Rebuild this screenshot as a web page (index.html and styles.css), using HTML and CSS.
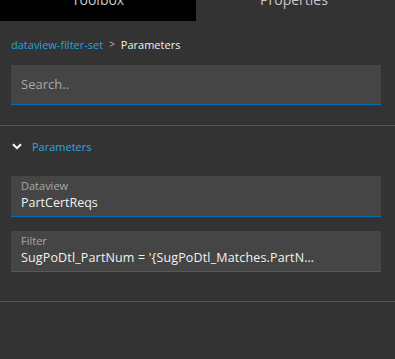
FILE: index.html
```html
<!DOCTYPE html>
<html>
<head>
<meta charset="utf-8">
<link rel="stylesheet" href="styles.css">
</head>
<body>
<div class="tabs">
  <div class="tab tab-active"><span class="tab-label">Toolbox</span></div>
  <div class="tab"><span class="tab-label">Properties</span></div>
</div>
<div class="breadcrumb">
  <span class="crumb-link">dataview-filter-set</span>
  <span class="crumb-sep">&gt;</span>
  <span class="crumb-current">Parameters</span>
</div>
<div class="search-wrap">
  <div class="search">Search..</div>
</div>
<div class="divider"></div>
<div class="section-head">
  <svg class="chevron" width="10" height="7" viewBox="0 0 10 7"><path d="M1 1.2 L5 5.2 L9 1.2" fill="none" stroke="#ffffff" stroke-width="2"/></svg>
  <span class="section-title">Parameters</span>
</div>
<div class="fields">
  <div class="field">
    <div class="field-label">Dataview</div>
    <div class="field-value">PartCertReqs</div>
  </div>
  <div class="field">
    <div class="field-label">Filter</div>
    <div class="field-value field-value-wide">SugPoDtl_PartNum = '{SugPoDtl_Matches.PartN…</div>
  </div>
</div>
<div class="divider divider-bottom"></div>
</body>
</html>
```
FILE: styles.css
```css
html, body {
  margin: 0;
  padding: 0;
  background: #333333;
  font-family: "Open Sans", "Noto Sans", sans-serif;
  overflow: hidden;
}
.tabs {
  display: flex;
  height: 21px;
  overflow: hidden;
}
.tab {
  width: 196px;
  text-align: center;
  color: #c8c8c8;
  font-size: 14px;
}
.tab-active {
  background: #000000;
}
.tab-label {
  display: block;
  margin-top: -9px;
  line-height: 18px;
}
.breadcrumb {
  display: flex;
  align-items: center;
  gap: 5px;
  padding: 14px 11px 0;
  height: 18px;
  font-size: 11px;
}
.crumb-link {
  color: #25a3dc;
}
.crumb-sep {
  color: #bbbbbb;
  font-size: 10px;
  padding: 0 1px;
}
.crumb-current {
  color: #f0f0f0;
}
.search-wrap {
  padding: 12px 14px 0 11px;
}
.search {
  height: 39px;
  background: #454545;
  border-bottom: 1px solid #0b6eae;
  padding: 0 10px;
  line-height: 39px;
  color: #a8a8a8;
  font-size: 13px;
}
.divider {
  height: 1px;
  background: #545454;
  margin-top: 20px;
}
.section-head {
  display: flex;
  align-items: center;
  height: 40px;
  padding: 0 12px;
  gap: 10px;
}
.section-title {
  color: #26aae2;
  font-size: 11px;
}
.fields {
  display: flex;
  flex-direction: column;
  gap: 14px;
  padding: 10px 14px 0 11px;
}
.field {
  background: #454545;
  border-bottom: 1px solid #0b6eae;
  padding: 2px 10px 0;
  box-sizing: border-box;
  height: 41px;
}
.field-label {
  color: #a8a8a8;
  font-size: 11px;
  line-height: 15px;
  margin-bottom: 1px;
}
.field-value {
  color: #f2f2f2;
  font-size: 12.5px;
  line-height: 18px;
  white-space: nowrap;
}
.field-value-wide {
  letter-spacing: 0.15px;
}
.divider-bottom {
  margin-top: 29px;
}
```
